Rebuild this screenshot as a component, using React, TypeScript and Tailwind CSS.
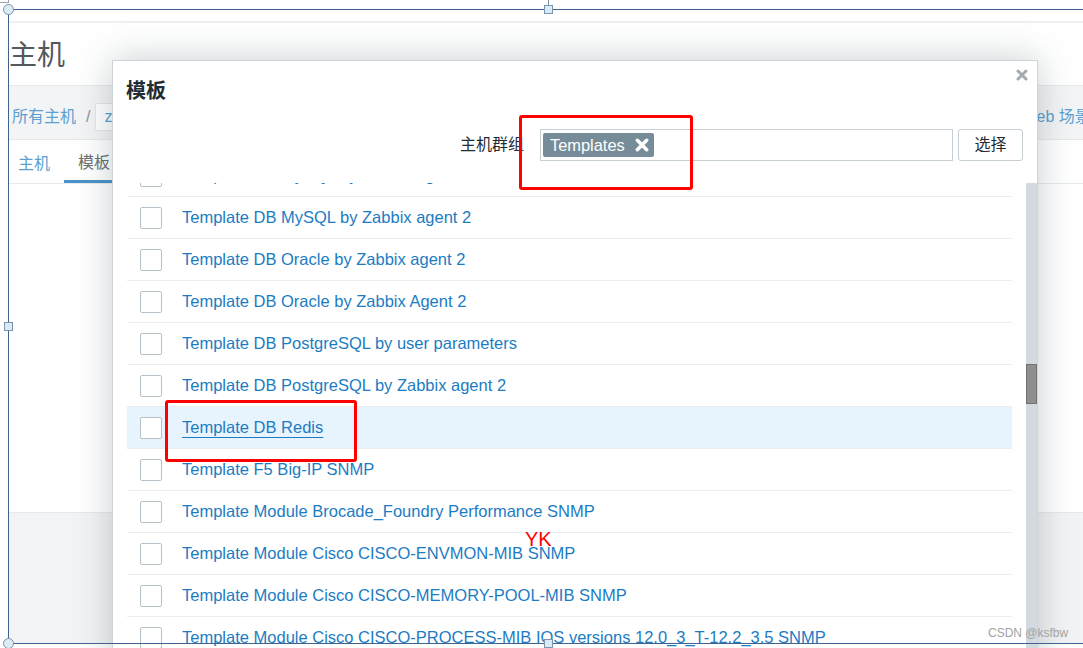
import React from 'react';

const rows = [
  'Template DB MySQL by Zabbix agent',
  'Template DB MySQL by Zabbix agent 2',
  'Template DB Oracle by Zabbix agent 2',
  'Template DB Oracle by Zabbix Agent 2',
  'Template DB PostgreSQL by user parameters',
  'Template DB PostgreSQL by Zabbix agent 2',
  'Template DB Redis',
  'Template F5 Big-IP SNMP',
  'Template Module Brocade_Foundry Performance SNMP',
  'Template Module Cisco CISCO-ENVMON-MIB SNMP',
  'Template Module Cisco CISCO-MEMORY-POOL-MIB SNMP',
  'Template Module Cisco CISCO-PROCESS-MIB IOS versions 12.0_3_T-12.2_3.5 SNMP',
  'Template Module Cisco CISCO-PROCESS-MIB SNMP',
];

function BoldX({ className, color }: { className: string; color: string }) {
  return (
    <svg viewBox="0 0 12 12" className={className}>
      <path d="M2 2 L10 10 M10 2 L2 10" stroke={color} strokeWidth="3" strokeLinecap="round" fill="none" />
    </svg>
  );
}

// Background Zabbix page, partly covered by the dialog
function Page() {
  return (
    <div className="ml-[9px] mt-[10px] h-[633px] flex flex-col">
      <div className="h-[11px]" />
      <div className="h-[2px] bg-[#eef0f1]" />
      <div className="h-[62px] flex items-center pt-[4px] text-[28px] text-[#53595d] leading-none">主机</div>
      <div className="h-[55px] bg-[#f3f4f5] border-y border-[#e6e9eb] flex items-center pt-[8px] text-[16px] whitespace-nowrap">
        <span className="ml-[3px] text-[#5c9fd0]">所有主机</span>
        <span className="ml-[10px] text-[#8a9094]">/</span>
        <span className="ml-[5px] h-[28px] w-[60px] bg-white border border-[#e3e7e9] rounded-[2px] flex items-center pl-[8px] text-[#5c9fd0]">
          zabbix
        </span>
        <span className="ml-[870px] text-[#5c9fd0]">Web 场景</span>
      </div>
      <div className="h-[44px] border-b border-[#e8ebed] flex items-stretch text-[16px]">
        <div className="ml-[9px] flex items-center pt-[4px] text-[#5c9fd0]">主机</div>
        <div className="ml-[14px] px-[14px] flex items-center text-[#6a6f72] border-b-[3px] border-[#4b93c8] pt-[6px]">
          模板
        </div>
      </div>
      <div className="h-[328px] bg-white" />
      <div className="flex-1 bg-[#f2f3f4] border-t border-[#e6e9eb]" />
    </div>
  );
}

function Dialog() {
  return (
    <div className="absolute left-[112px] top-[60px] w-[926px] h-[640px] bg-white border border-[#cdd5d9] shadow-[0_0_34px_rgba(40,60,70,0.26)] flex flex-col">
      <div className="relative h-[58px] flex items-center pl-[13px] pt-[2px] text-[20px] font-bold text-[#1f2c33]">
        模板
        <BoldX className="absolute right-[9px] top-[8px] w-[12px] h-[12px]" color="#a4aaae" />
      </div>
      <div className="mt-[10px] h-[32px] flex items-center justify-end pr-[14px] text-[16px] text-[#1f2c33]">
        <span>主机群组</span>
        <div className="ml-[16px] w-[413px] h-[32px] border border-[#c6cfd4] flex items-center pl-[2px]">
          <div className="h-[24px] bg-[#768d99] rounded-[2px] flex items-center pl-[7px] pr-[5px] text-[16.4px] text-white">
            <span>Templates</span>
            <BoldX className="ml-[10px] w-[14px] h-[14px]" color="#ffffff" />
          </div>
        </div>
        <button className="ml-[5px] w-[65px] h-[32px] border border-[#c6cfd4] rounded-[3px] bg-white text-[16px] text-[#1f2c33]">
          选择
        </button>
      </div>
      <div className="mt-[22px] flex-1 flex overflow-hidden">
        <div className="w-[913px] px-[14px] overflow-hidden">
          <div className="-mt-[28px]">
            {rows.map((r, i) => {
              const hl = r === 'Template DB Redis';
              return (
                <div
                  key={i}
                  className={`h-[42px] border-b border-[#ebeef0] flex items-center whitespace-nowrap ${hl ? 'bg-[#e8f4fd]' : ''}`}
                >
                  <div className="ml-[13px] w-[22px] h-[22px] border border-[#b6c2c8] rounded-[2px] bg-white shrink-0" />
                  <span
                    className={`ml-[20px] text-[16.5px] text-[#1c7cc3] ${hl ? 'underline underline-offset-[4px] decoration-1' : ''}`}
                  >
                    {r}
                  </span>
                </div>
              );
            })}
          </div>
        </div>
        <div className="w-[11px] bg-[#d2dadf] flex flex-col">
          <div className="mt-[181px] h-[40px] bg-[#8e8e8e] border border-[#717171]" />
        </div>
      </div>
    </div>
  );
}

// Editor selection frame drawn over the screenshot
function Frame() {
  const sq = 'absolute w-[9px] h-[9px] bg-[#d9ecf6] border border-[#7d93ad]';
  const circ = 'absolute w-[11px] h-[11px] rounded-full bg-[#dcecf5] border border-[#7d93ad]';
  return (
    <>
      <div className="absolute left-0 top-[2px] w-[9px] h-px bg-[#9aa3ab]" />
      <div className="absolute left-[8px] top-0 w-px h-[3px] bg-[#9aa3ab]" />
      <div className="absolute left-[8px] top-[9px] right-0 h-px bg-[#41628e]" />
      <div className="absolute left-[8px] top-[9px] w-px h-[635px] bg-[#41628e]" />
      <div className="absolute left-[8px] top-[643px] right-0 h-px bg-[#41628e]" />
      <div className="absolute left-[548px] top-0 w-px h-[5px] bg-[#7d93ad]" />
      <div className={`${circ} left-[3px] top-[4px]`} />
      <div className={`${sq} left-[544px] top-[5px]`} />
      <div className={`${sq} left-[4px] top-[322px]`} />
      <div className={`${circ} left-[3px] top-[638px]`} />
      <div className={`${sq} left-[544px] top-[639px]`} />
    </>
  );
}

export default function App() {
  return (
    <div className="relative w-[1083px] h-[648px] overflow-hidden bg-white font-['Liberation_Sans','Noto_Sans_CJK_SC',sans-serif]">
      <Page />
      <Dialog />
      <div className="absolute left-[519px] top-[115px] w-[174px] h-[75px] border-[3px] border-[#ff0000] rounded-[3px]" />
      <div className="absolute left-[165px] top-[400px] w-[192px] h-[62px] border-[3px] border-[#ff0000] rounded-[3px]" />
      <div className="absolute left-[525px] top-[529px] text-[20px] leading-none text-[#ff0000]">YK</div>
      <div className="absolute left-[988px] top-[627px] text-[12px] leading-none text-[#a3a3a3]">CSDN @ksfbw</div>
      <Frame />
    </div>
  );
}
